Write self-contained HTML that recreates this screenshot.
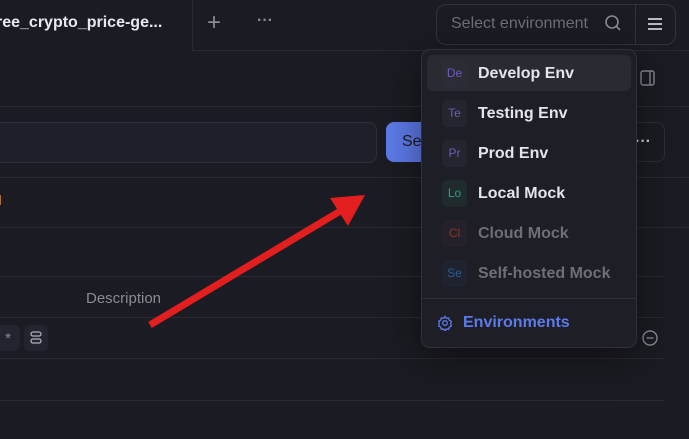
<!DOCTYPE html><html><head><style>
body{margin:0;width:689px;height:439px;background:#1b1b23;font-family:"Liberation Sans",sans-serif;overflow:hidden;position:relative;color:#e4e4ea}
.a{position:absolute}
.hl{position:absolute;height:1px;background:#2a2a35}
.it{position:absolute;left:427px;width:204px;height:36px;border-radius:6px}
.bd{position:absolute;left:15px;top:5px;width:25px;height:27px;border-radius:5px;background:#25252f;font-size:12px;text-align:center;line-height:27px}
.lb{position:absolute;left:51px;top:10px;font-size:16px;font-weight:bold}
</style></head><body>
<div class="a" style="top:14px;font-size:16px;font-weight:bold;color:#e8e8ee;left:-4px">ree_crypto_price-ge...</div>
<div class="a" style="left:192px;top:0;width:1px;height:50px;background:#2a2a35"></div>
<div class="hl" style="left:192px;top:50px;width:497px"></div>
<div class="a" style="left:207px;top:9px;font-size:24px;color:#8a8a95">+</div>
<div class="a" style="left:257px;top:12px;font-size:16px;color:#8a8a95;font-weight:bold">···</div>
<div class="a" style="left:436px;top:4px;width:238px;height:39px;border:1px solid #33333f;border-radius:10px"></div>
<div class="a" style="left:635px;top:5px;width:1px;height:39px;background:#33333f"></div>
<div class="a" style="left:451px;top:15px;font-size:16px;color:#6e6e7a">Select environment</div>
<svg class="a" style="left:604px;top:14px" width="18" height="18" viewBox="0 0 18 18"><circle cx="8" cy="8" r="6" fill="none" stroke="#8a8a95" stroke-width="1.6"/><path d="M12.5 12.5L16 16" stroke="#8a8a95" stroke-width="1.6"/></svg>
<svg class="a" style="left:647px;top:17px" width="16" height="14"><path d="M1 2H15M1 7H15M1 12H15" stroke="#d0d0d8" stroke-width="1.8"/></svg>
<svg class="a" style="left:640px;top:70px" width="16" height="16"><rect x="1" y="1" width="13" height="14" rx="2" fill="none" stroke="#8a8a95" stroke-width="1.4"/><path d="M10 1V15" stroke="#8a8a95" stroke-width="1.4"/></svg>
<div class="hl" style="left:0;top:106px;width:689px"></div>
<div class="a" style="left:-10px;top:122px;width:385px;height:39px;border:1px solid #2e2e3a;border-radius:8px;background:#1f1f29"></div>
<div class="a" style="left:386px;top:122px;width:60px;height:40px;border-radius:8px;background:#5d7ae8"><span style="position:absolute;left:16px;top:11px;font-size:16px;color:#1b1b23">Se</span></div>
<div class="a" style="left:600px;top:122px;width:63px;height:38px;border:1px solid #2e2e3a;border-radius:8px"><span style="position:absolute;left:34px;top:10px;font-size:16px;font-weight:bold;color:#d0d0d8">···</span></div>
<div class="hl" style="left:0;top:177px;width:689px"></div>
<div class="a" style="left:-3px;top:195px;width:4px;height:10px;background:#b06a30"></div>
<div class="hl" style="left:0;top:227px;width:689px"></div>
<div class="hl" style="left:0;top:276px;width:664px"></div>
<div class="a" style="left:86px;top:290px;font-size:15px;color:#8a8a95">Description</div>
<div class="hl" style="left:0;top:317px;width:664px"></div>
<div class="a" style="top:325px;width:24px;height:26px;border-radius:6px;background:#24242e;color:#8a8a95;font-size:15px;text-align:center;line-height:28px;left:-4px">*</div>
<div class="a" style="left:24px;top:325px;width:24px;height:26px;border-radius:6px;background:#24242e"></div>
<svg class="a" style="left:29px;top:330px" width="14" height="16"><rect x="2" y="2" width="10" height="4" rx="2" fill="none" stroke="#b0b0ba" stroke-width="1.3"/><rect x="2" y="9" width="10" height="4" rx="2" fill="none" stroke="#b0b0ba" stroke-width="1.3"/></svg>
<svg class="a" style="left:641px;top:329px" width="18" height="18"><circle cx="9" cy="9" r="7" fill="none" stroke="#8a8a95" stroke-width="1.4"/><path d="M5.5 9H12.5" stroke="#8a8a95" stroke-width="1.4"/></svg>
<div class="hl" style="left:0;top:358px;width:664px"></div>
<div class="hl" style="left:0;top:400px;width:664px"></div>
<svg class="a" style="left:0;top:0" width="689" height="439"><path d="M150 325L347 207" stroke="#e31e1e" stroke-width="7"/><path d="M365 195L330 198L348 226Z" fill="#e31e1e"/></svg>
<div class="a" style="left:421px;top:49px;width:214px;height:297px;border:1px solid #30303b;border-radius:9px;background:#1e1e27;box-shadow:0 10px 40px rgba(0,0,0,.45)"></div>
<div class="it" style="top:55px;background:#2a2a33"><div class="bd" style="color:#6d5cb8;background:#2c2c37">De</div><div class="lb">Develop Env</div></div>
<div class="it" style="top:95px"><div class="bd" style="color:#6d5cb8">Te</div><div class="lb">Testing Env</div></div>
<div class="it" style="top:135px"><div class="bd" style="color:#6d5cb8">Pr</div><div class="lb">Prod Env</div></div>
<div class="it" style="top:175px"><div class="bd" style="color:#2a9b8f;background:#1f2b2d">Lo</div><div class="lb">Local Mock</div></div>
<div class="it" style="top:215px"><div class="bd" style="color:#8a3b25;background:#24212a">Cl</div><div class="lb" style="color:#6e6e78">Cloud Mock</div></div>
<div class="it" style="top:255px"><div class="bd" style="color:#2c5c91;background:#1f2330">Se</div><div class="lb" style="color:#6e6e78">Self-hosted Mock</div></div>
<div class="a" style="left:422px;top:298px;width:214px;height:1px;background:#30303b"></div>
<svg class="a" style="left:437px;top:315px" width="16" height="16" viewBox="0 0 24 24"><path d="M12 2l2 3 3.5-.5 1 3.4 3 1.6-1 3.5 1 3.5-3 1.6-1 3.4L14 21l-2 3-2-3-3.5.5-1-3.4-3-1.6 1-3.5-1-3.5 3-1.6 1-3.4L10 5z" fill="none" stroke="#5d7ae8" stroke-width="2"/><circle cx="12" cy="12" r="3.5" fill="none" stroke="#5d7ae8" stroke-width="2"/></svg>
<div class="a" style="left:463px;top:314px;font-size:16px;font-weight:bold;color:#5d7ae8">Environments</div>
</body></html>
